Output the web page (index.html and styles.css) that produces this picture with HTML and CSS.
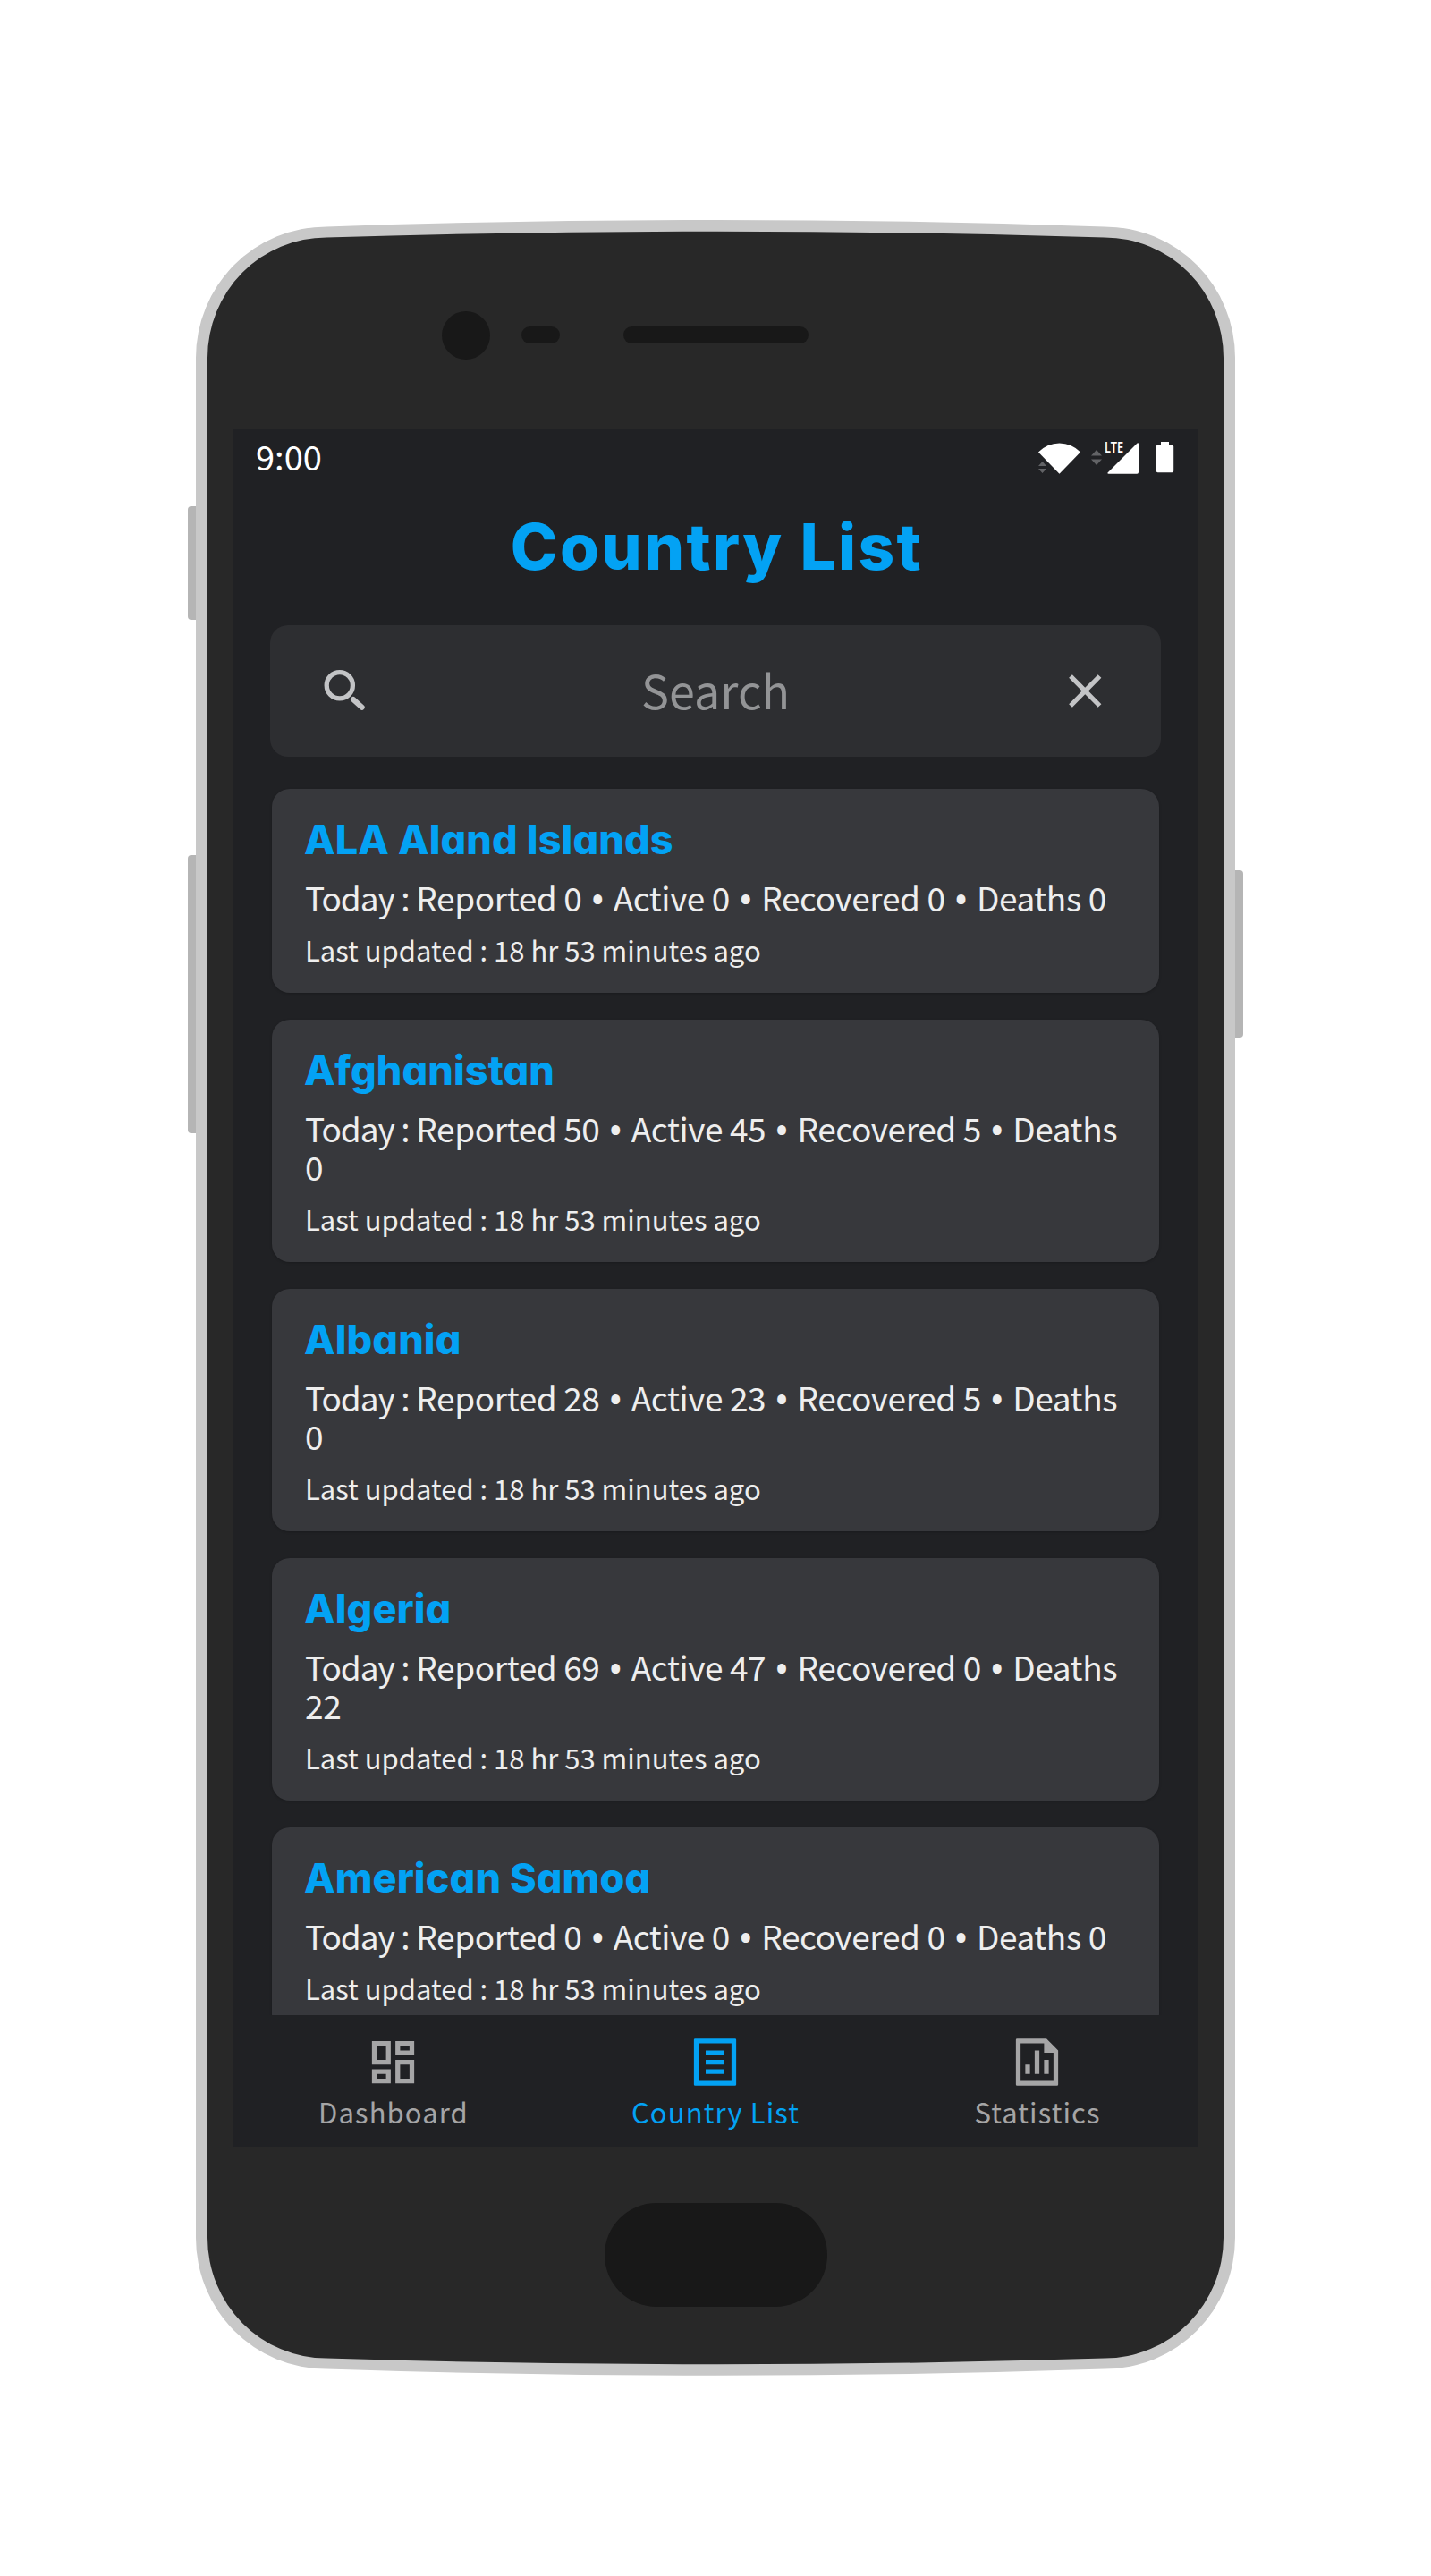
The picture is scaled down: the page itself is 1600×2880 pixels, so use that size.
FILE: index.html
```html
<!DOCTYPE html>
<html lang="en">
<head>
<meta charset="utf-8">
<title>Country List</title>
<link rel="stylesheet" href="styles.css">
</head>
<body>
<div class="phone">
  <svg class="phone-frame" viewBox="0 0 1600 2880" aria-hidden="true">
    <g fill="#b5b5b5">
      <rect x="210" y="566" width="16" height="127" rx="4"/>
      <rect x="210" y="956" width="16" height="311" rx="4"/>
      <rect x="1374" y="973" width="16" height="187" rx="4"/>
    </g>
    <path fill="#c8c8c8" d="M219 400A146 146.600 0 0 1 365 253.400Q800 238.500 1235 253.400A146 146.600 0 0 1 1381 400V2502A146 146.600 0 0 1 1235 2648.600Q800 2663 365 2648.600A146 146.600 0 0 1 219 2502Z"/>
    <path fill="#282828" d="M232 400A133 134.600 0 0 1 365 265.400Q800 252 1235 265.400A133 134.600 0 0 1 1368 400V2502A133 134.600 0 0 1 1235 2636.600Q800 2650 365 2636.600A133 134.600 0 0 1 232 2502Z"/>
    <g fill="#181818">
      <circle cx="521" cy="375" r="27"/>
      <rect x="583" y="365" width="43" height="19" rx="9.5"/>
      <rect x="697" y="365" width="207" height="19" rx="9.5"/>
      <rect x="676" y="2463" width="249" height="116" rx="58"/>
    </g>
  </svg>

  <div class="screen">
    <div class="status">
      <span class="clock">9:00</span>
      <svg class="status-icons" viewBox="1156 480 160 60">
        <g fill="#fff">
          <path d="M1161 505.5Q1171 495.5 1184.5 495.5T1208 505.5L1184.5 529.7Z"/>
          <path d="M1271.5 495.5Q1273 494.5 1273 496.5V528Q1273 529.7 1271.3 529.7H1239.5Q1237.500 529.500 1239 528Z"/>
          <path d="M1298 494h9v3.500h3.500q1.700 0 1.700 1.700v27.300q0 1.700-1.700 1.700h-16q-1.700 0-1.700-1.700v-27.300q0-1.700 1.700-1.700h3.500z"/>
        </g>
        <g fill="#626366">
          <path d="M1161 521l4.500-5 4.500 5zM1161 524h9l-4.500 5z"/>
          <path d="M1220 509.500l6-6.500 6 6.500zM1220 513.500h12l-6 6.500z"/>
        </g>
        <text class="lte" x="1235" y="506" textLength="21" lengthAdjust="spacingAndGlyphs">LTE</text>
      </svg>
    </div>

    <h1 class="title">Country List</h1>

    <div class="search">
      <svg class="search-icon" viewBox="0 0 52 52" fill="none" stroke="#c3c4c6" stroke-width="5.300">
        <circle cx="19.800" cy="19.200" r="14.600"/>
        <path stroke-width="6" stroke-linecap="round" d="M35 35L44.700 43.800"/>
      </svg>
      <span class="placeholder">Search</span>
      <svg class="search-icon" viewBox="0 0 52 52" fill="none" stroke="#c3c4c6" stroke-width="5.300">
        <path d="M9 9L41.500 42M41.500 9L9 42"/>
      </svg>
    </div>

    <div class="list">
      <article class="card">
        <h2 class="name">ALA Aland Islands</h2>
        <p class="today"><span class="label">Today :</span> Reported 0 <i class="dot">•</i> Active 0 <i class="dot">•</i> Recovered 0 <i class="dot">•</i> Deaths 0</p>
        <p class="updated">Last updated : 18 hr 53 minutes ago</p>
      </article>
      <article class="card">
        <h2 class="name">Afghanistan</h2>
        <p class="today"><span class="label">Today :</span> Reported 50 <i class="dot">•</i> Active 45 <i class="dot">•</i> Recovered 5 <i class="dot">•</i> Deaths 0</p>
        <p class="updated">Last updated : 18 hr 53 minutes ago</p>
      </article>
      <article class="card">
        <h2 class="name">Albania</h2>
        <p class="today"><span class="label">Today :</span> Reported 28 <i class="dot">•</i> Active 23 <i class="dot">•</i> Recovered 5 <i class="dot">•</i> Deaths 0</p>
        <p class="updated">Last updated : 18 hr 53 minutes ago</p>
      </article>
      <article class="card">
        <h2 class="name">Algeria</h2>
        <p class="today"><span class="label">Today :</span> Reported 69 <i class="dot">•</i> Active 47 <i class="dot">•</i> Recovered 0 <i class="dot">•</i> Deaths 22</p>
        <p class="updated">Last updated : 18 hr 53 minutes ago</p>
      </article>
      <article class="card">
        <h2 class="name">American Samoa</h2>
        <p class="today"><span class="label">Today :</span> Reported 0 <i class="dot">•</i> Active 0 <i class="dot">•</i> Recovered 0 <i class="dot">•</i> Deaths 0</p>
        <p class="updated">Last updated : 18 hr 53 minutes ago</p>
      </article>
    </div>

    <nav class="tabs">
      <a class="tab">
        <svg class="tab-icon" viewBox="0 0 24 24"><path fill="currentColor" d="M19 5v2h-4V5h4M9 5v6H5V5h4m10 8v6h-4v-6h4M9 17v2H5v-2h4M21 3h-8v6h8V3zM11 3H3v10h8V3zm10 8h-8v10h8V11zm-10 4H3v6h8v-6z"/></svg>
        <span>Dashboard</span>
      </a>
      <a class="tab tab-active">
        <svg class="tab-icon" viewBox="0 0 24 24"><path fill="currentColor" fill-rule="evenodd" d="M3.500 2h17q.5 0 .5.5v19q0 .5-.5.5h-17q-.5 0-.5-.5v-19q0-.5.5-.5zM5 4v16h14V4zM8 7h8v2H8zM8 11h8v2H8zM8 15h8v2H8z"/></svg>
        <span>Country List</span>
      </a>
      <a class="tab">
        <svg class="tab-icon" viewBox="0 0 24 24"><path fill="currentColor" fill-rule="evenodd" d="M3.500 2H16l5 5v14.500q0 .5-.5.5h-17q-.5 0-.5-.5v-19q0-.5.5-.5zM5 4v16h14V8h-4V4zM7 13h2v4H7zM11 7h2v10h-2zM15 11h2v6h-2z"/></svg>
        <span>Statistics</span>
      </a>
    </nav>
  </div>
</div>
</body>
</html>
```
FILE: styles.css
```css
* {
  box-sizing: border-box;
}

body {
  margin: 0;
  background: #fff;
  font-family: "Noto Sans CJK SC", "Noto Sans", sans-serif;
}

.phone {
  position: relative;
  width: 1600px;
  height: 2880px;
  padding: 480px 260px;
}

.phone-frame {
  position: absolute;
  inset: 0;
  width: 1600px;
  height: 2880px;
}

.screen {
  position: relative;
  display: flex;
  flex-direction: column;
  width: 1080px;
  height: 1920px;
  background: #202124;
  overflow: hidden;
}

.status {
  display: flex;
  justify-content: space-between;
  height: 60px;
  padding: 0 24px 0 26px;
  color: #fff;
}

.clock {
  font-size: 38px;
  line-height: 60px;
}

.status-icons {
  width: 160px;
  height: 60px;
}

.lte {
  fill: #fff;
  font: 600 15.5px "Noto Sans", sans-serif;
}

.title {
  margin: 31px 0 0;
  padding-left: 3px;
  color: #03a2f4;
  font: 800 71px/80px Inter, sans-serif;
  letter-spacing: 2.4px;
  text-align: center;
}

.search {
  display: flex;
  align-items: center;
  justify-content: space-between;
  flex: none;
  height: 147px;
  margin: 48px 42px 0;
  padding: 0 58px;
  border-radius: 20px;
  background: #2d2e31;
}

.search-icon {
  width: 52px;
  height: 52px;
}

.placeholder {
  padding-bottom: 3px;
  color: #939496;
  font-size: 52px;
  line-height: 70px;
}

.list {
  display: flex;
  flex: 1;
  flex-direction: column;
  gap: 30px;
  min-height: 0;
  margin-top: 20px;
  padding: 16px 44px 0;
  overflow: hidden;
}

.card {
  flex: none;
  padding: 30px 36px 28px;
  border-radius: 20px;
  background: #37383c;
  box-shadow: 0 1px 3px rgba(0, 0, 0, 0.2);
}

.name {
  margin: 0;
  color: #03a2f4;
  font: 800 45px/54px Inter, sans-serif;
  font-feature-settings: "cv11";
  letter-spacing: 0.1px;
}

.today {
  margin: 16px 0 0;
  padding-left: 1px;
  color: #eee;
  font-size: 37px;
  line-height: 43px;
  letter-spacing: -0.4px;
}

.label {
  letter-spacing: -1px;
}

.dot {
  margin: 0 1.7px;
  font-family: "Noto Sans", sans-serif;
  font-size: 44px;
  font-style: normal;
  line-height: 0;
  vertical-align: -3px;
}

.updated {
  margin: 17px 0 0;
  padding-left: 1px;
  color: #eee;
  font-size: 31px;
  line-height: 40px;
}

.tabs {
  display: grid;
  grid-template-columns: repeat(3, 1fr);
  flex: none;
  height: 147px;
  padding-top: 21px;
  background: #202124;
}

.tab {
  display: flex;
  flex-direction: column;
  align-items: center;
  gap: 6px;
  color: #a5a5a6;
  font-size: 31px;
  line-height: 36px;
  letter-spacing: 1.1px;
}

.tab-active {
  color: #03a2f4;
}

.tab-icon {
  width: 63px;
  height: 63px;
  margin-right: 1px;
}
```
